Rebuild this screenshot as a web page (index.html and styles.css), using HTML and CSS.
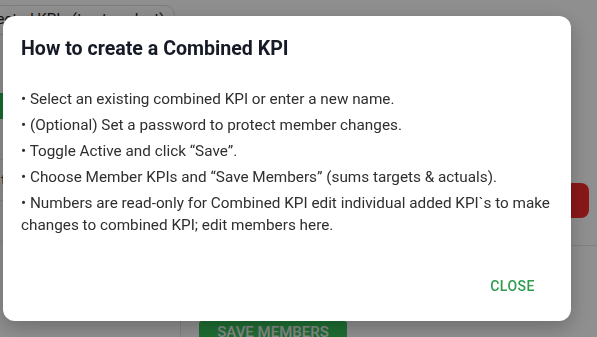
FILE: index.html
```html
<!DOCTYPE html>
<html lang="en">
<head>
    <meta charset="UTF-8">
    <meta name="viewport" content="width=device-width, initial-scale=1.0">
    <title>Combined KPI</title>
    <link rel="stylesheet" href="styles.css">
</head>
<body>
    <div class="page">
        <div class="tabs">
            <div class="tab">Selected KPIs (tap to select)</div>
        </div>
        <div class="content">
            <div class="side">
                <div class="side-btn"></div>
                <div class="side-row"></div>
                <div class="side-row">to</div>
                <div class="side-row"></div>
            </div>
            <div class="main">
                <div class="main-top">
                    <button class="danger"></button>
                </div>
                <div class="main-rule"></div>
                <div class="main-bottom">
                    <button class="save">SAVE MEMBERS</button>
                </div>
            </div>
        </div>
    </div>

    <div class="overlay">
        <div class="dialog" role="dialog">
            <h2 class="dialog-title">How to create a Combined KPI</h2>
            <div class="dialog-body">
                <p>&bull; Select an existing combined KPI or enter a new name.</p>
                <p>&bull; (Optional) Set a password to protect member changes.</p>
                <p>&bull; Toggle Active and click &ldquo;Save&rdquo;.</p>
                <p>&bull; Choose Member KPIs and &ldquo;Save Members&rdquo; (sums targets &amp; actuals).</p>
                <p>&bull; Numbers are read-only for Combined KPI edit individual added KPI`s to make changes to combined KPI; edit members here.</p>
            </div>
            <div class="dialog-actions">
                <button class="text-btn">CLOSE</button>
            </div>
        </div>
    </div>
</body>
</html>
```

FILE: styles.css
```css
body, html {
    height: 100%;
    margin: 0;
    font-family: Roboto, "Liberation Sans", Arial, sans-serif;
    overflow: hidden;
}

body {
    background-color: #ffffff;
}

/* page behind the dialog */
.page {
    height: 100%;
    display: flex;
    flex-direction: column;
    overflow: hidden;
}

.tabs {
    padding-top: 5px;
    height: 30px;
    flex-shrink: 0;
}

.tab {
    width: 208px;
    height: 30px;
    margin-left: -33px;
    box-sizing: border-box;
    border: 1px solid #dddddd;
    border-radius: 0 10px 0 0;
    padding: 4px 8px;
    font-size: 15px;
    color: #222222;
    white-space: nowrap;
}

.content {
    flex: 1;
    display: flex;
    min-height: 0;
}

.side {
    width: 180px;
    border-right: 1px solid #e6e6e6;
}

.side-btn {
    width: 5px;
    height: 26px;
    margin-top: 58px;
    background-color: #2fbf55;
}

.side-row {
    height: 40px;
    border-bottom: 1px solid #eeeeee;
    font-size: 15px;
    color: #333;
    line-height: 40px;
    padding-left: 1px;
}

.main {
    flex: 1;
    display: flex;
    flex-direction: column;
}

.main-top {
    height: 183px;
    flex-shrink: 0;
    display: flex;
    justify-content: flex-end;
    align-items: flex-end;
}

.danger {
    width: 36px;
    height: 35px;
    margin-right: 8px;
    border: none;
    border-radius: 8px;
    background-color: #f52b2b;
}

.main-rule {
    flex-shrink: 0;
    margin-top: 27px;
    border-bottom: 1px solid #e6e6e6;
}

.main-bottom {
    flex-shrink: 0;
    display: flex;
    align-items: flex-start;
    padding: 75px 0 0 18px;
}

.save {
    width: 148px;
    height: 34px;
    border: none;
    border-radius: 3px;
    background-color: #35c35a;
    color: #f2f2f2;
    font-family: Roboto, sans-serif;
    font-size: 15px;
    font-weight: 500;
    padding: 0 0 12px;
}

/* dialog */
.overlay {
    position: fixed;
    top: 0;
    left: 0;
    right: 0;
    bottom: 0;
    background-color: rgba(0, 0, 0, 0.44);
    display: flex;
    align-items: center;
    padding-left: 3px;
}

.dialog {
    width: 568px;
    box-sizing: border-box;
    background-color: #ffffff;
    border-radius: 12px;
    box-shadow: 0 6px 20px rgba(0, 0, 0, 0.25);
    padding: 21px 14px 0 18px;
}

.dialog-title {
    margin: 0;
    font-size: 19.6px;
    line-height: 24px;
    font-weight: 700;
    color: #151a26;
}

.dialog-body {
    padding: 27px 0 32px;
    font-size: 15.3px;
    line-height: 22px;
    color: #2f2f2f;
}

.dialog-body p {
    margin: 0 0 4px;
}

.dialog-body p:last-child {
    margin-bottom: 0;
}

.dialog-actions {
    display: flex;
    justify-content: flex-end;
    padding: 0 10px 17px 0;
}

.text-btn {
    height: 36px;
    padding: 0 12px;
    border: none;
    border-radius: 4px;
    background: transparent;
    color: #2e9b4f;
    font-family: Roboto, sans-serif;
    font-size: 14px;
    font-weight: 500;
    letter-spacing: 0.5px;
    cursor: pointer;
}
```
